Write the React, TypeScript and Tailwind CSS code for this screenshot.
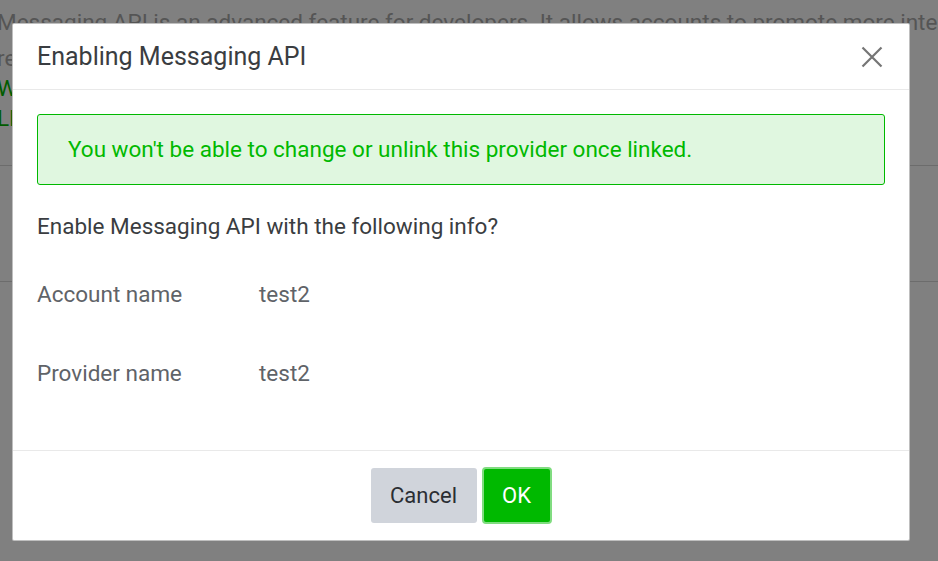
import React from "react";

const font = { fontFamily: "Roboto, 'Liberation Sans', sans-serif" };

function CloseIcon() {
  return (
    <svg width="22" height="22" viewBox="0 0 22 22" fill="none">
      <path d="M1.5 1.5 L20.5 20.5 M20.5 1.5 L1.5 20.5" stroke="#757575" strokeWidth="2.2" />
    </svg>
  );
}

export default function App() {
  const rows = [
    { label: "Account name", value: "test2" },
    { label: "Provider name", value: "test2" },
  ];

  return (
    <div className="relative h-[561px] w-[938px] overflow-hidden bg-[#808080]" style={font}>
      {/* page behind the dimmed overlay */}
      <div className="-ml-[3px] pt-[4px] text-[22.5px] text-[#555555]">
        <p className="whitespace-nowrap leading-[36px]">
          Messaging API is an advanced feature for developers. It allows accounts to promote more interactive
          <br />
          respond to users.
        </p>
        <div className="-mt-[3px] leading-[30px] text-[#005c00]">
          <p className="whitespace-nowrap">What is Messaging API</p>
          <p className="whitespace-nowrap">LINE API documentation</p>
        </div>
      </div>
      <div className="mt-[32px] h-px bg-[#6c6c6c]" />
      <div className="mt-[115px] h-px bg-[#6c6c6c]" />

      {/* modal */}
      <div className="absolute left-[12px] top-[23px] w-[898px] rounded-[2px] border border-black/25 bg-white">
        <div className="flex h-[66px] items-center justify-between border-b border-[#e9e9e9] pl-[24px] pr-[26px]">
          <h2 className="text-[25px] text-[#3a3d41]">Enabling Messaging API</h2>
          <button className="flex h-[22px] w-[22px] items-center justify-center">
            <CloseIcon />
          </button>
        </div>

        <div className="h-[360px] px-[24px] pt-[24px]">
          <div className="flex h-[71px] items-center rounded-[3px] border border-[#00b900] bg-[#e0f7e0] pl-[30px] text-[22.5px] text-[#00b900]">
            You won't be able to change or unlink this provider once linked.
          </div>
          <p className="mt-[26px] text-[22.5px] leading-[30px] text-[#3a3d41]">
            Enable Messaging API with the following info?
          </p>
          <div className="mt-[38px] flex flex-col gap-[49px]">
            {rows.map((r) => (
              <div key={r.label} className="flex text-[22.5px] leading-[30px] text-[#5f6368]">
                <span className="w-[222px]">{r.label}</span>
                <span>{r.value}</span>
              </div>
            ))}
          </div>
        </div>

        <div className="flex h-[90px] items-start justify-center gap-[5px] border-t border-[#e9e9e9] pt-[17px]">
          <button className="h-[55px] w-[106px] rounded-[3px] bg-[#d0d4db] text-[22px] text-[#2b2e33]">
            Cancel
          </button>
          <button className="-mt-px h-[57px] w-[70px] rounded-[4px] border-2 border-[#80dc80] bg-[#00b900] text-[22px] text-white">
            OK
          </button>
        </div>
      </div>
    </div>
  );
}
